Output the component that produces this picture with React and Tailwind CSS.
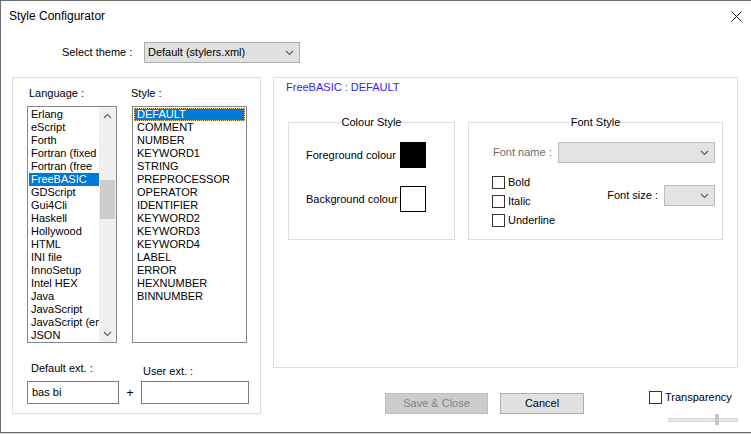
import React from 'react'

const languages = [
  'Erlang', 'eScript', 'Forth', 'Fortran (fixed', 'Fortran (free', 'FreeBASIC', 'GDScript',
  'Gui4Cli', 'Haskell', 'Hollywood', 'HTML', 'INI file', 'InnoSetup', 'Intel HEX', 'Java',
  'JavaScript', 'JavaScript (em', 'JSON',
]

const styles = [
  'DEFAULT', 'COMMENT', 'NUMBER', 'KEYWORD1', 'STRING', 'PREPROCESSOR', 'OPERATOR',
  'IDENTIFIER', 'KEYWORD2', 'KEYWORD3', 'KEYWORD4', 'LABEL', 'ERROR', 'HEXNUMBER', 'BINNUMBER',
]

function Chevron({ up = false, color = '#555' }) {
  return (
    <svg width="9" height="6" viewBox="0 0 9 6">
      <polyline
        points={up ? '1,5 4.5,1.5 8,5' : '1,1 4.5,4.5 8,1'}
        fill="none"
        stroke={color}
        strokeWidth="1.2"
      />
    </svg>
  )
}

function Combo({ width, text, disabled }) {
  return (
    <div
      className={`${width} h-[21px] flex items-center justify-between pl-[3px] pr-[5px] border ${
        disabled ? 'bg-[#e3e3e3] border-[#bcbcbc]' : 'bg-[#e1e1e1] border-[#adadad]'
      }`}
    >
      <span className="leading-[13px]">{text}</span>
      <Chevron color="#606060" />
    </div>
  )
}

function CheckBox({ label }) {
  return (
    <div className="flex items-center h-[13px]">
      <div className="w-[13px] h-[13px] border border-[#333] bg-white" />
      <span className="ml-[3px] leading-[13px]">{label}</span>
    </div>
  )
}

function GroupBox({ title, className, children }) {
  return (
    <div className={`relative border border-[#dcdcdc] ${className}`}>
      <span className="absolute -top-[7px] left-0 right-0 flex justify-center leading-[13px]">
        <span className="bg-white px-[1px]">{title}</span>
      </span>
      {children}
    </div>
  )
}

export default function App() {
  return (
    <div
      className="w-[751px] h-[434px] overflow-hidden bg-[#d4d4d4] text-[11px] text-black"
      style={{ fontFamily: '"Liberation Sans", Arial, sans-serif' }}
    >
      <div className="w-[751px] h-[433px] bg-white border-l border-t border-b border-[#6d6d6d] flex flex-col">
        {/* Title bar */}
        <div className="h-[30px] flex items-center justify-between pl-[8px] pr-[9px]">
          <span className="text-[12px]">Style Configurator</span>
          <svg width="11" height="11" viewBox="0 0 11 11">
            <path d="M0.5 0.5 L10.5 10.5 M10.5 0.5 L0.5 10.5" stroke="#111" strokeWidth="1" />
          </svg>
        </div>

        {/* Theme selector */}
        <div className="mt-[11px] pl-[61px] flex items-center">
          <span className="w-[82px] leading-[13px]">Select theme :</span>
          <Combo width="w-[156px]" text="Default (stylers.xml)" />
        </div>

        <div className="mt-[14px] pl-[11px] flex gap-[12px]">
          {/* Left group */}
          <div className="w-[249px] h-[337px] border border-[#dcdcdc] pt-[9px] pl-[14px]">
            <div className="flex gap-[15px]">
              <div className="w-[90px]">
                <div className="pl-[2px] leading-[13px] mb-[6px]">Language :</div>
                <div className="h-[237px] border border-[#828790] flex">
                  <div className="flex-1 pt-[1px] pl-[1px] overflow-hidden">
                    {languages.map((l) => (
                      <div
                        key={l}
                        className={`h-[13px] leading-[13px] pl-[2px] whitespace-nowrap ${
                          l === 'FreeBASIC' ? 'bg-[#0078d7] text-white' : ''
                        }`}
                      >
                        {l}
                      </div>
                    ))}
                  </div>
                  <div className="w-[17px] bg-[#f0f0f0] flex flex-col">
                    <div className="h-[17px] flex items-center justify-center">
                      <Chevron up color="#606060" />
                    </div>
                    <div className="h-[56px]" />
                    <div className="h-[39px] mx-[1px] bg-[#cdcdcd]" />
                    <div className="flex-1" />
                    <div className="h-[17px] flex items-center justify-center">
                      <Chevron color="#606060" />
                    </div>
                  </div>
                </div>
              </div>
              <div className="w-[115px]">
                <div className="-ml-[1px] leading-[13px] mb-[6px]">Style :</div>
                <div className="h-[237px] border border-[#828790] pt-[1px] px-[1px]">
                  {styles.map((s) => (
                    <div
                      key={s}
                      className={`h-[13px] leading-[11px] pl-[2px] ${
                        s === 'DEFAULT'
                          ? 'bg-[#0078d7] text-white border border-dotted border-[#f3c87a]'
                          : 'border border-transparent'
                      }`}
                    >
                      {s}
                    </div>
                  ))}
                </div>
              </div>
            </div>

            <div className="mt-[19px] flex items-end">
              <div className="flex flex-col">
                <span className="pl-[4px] leading-[13px] mb-[6px]">Default ext. :</span>
                <div className="w-[92px] h-[23px] border border-[#7a7a7a] flex items-center pl-[4px]">
                  bas bi
                </div>
              </div>
              <div className="w-[22px] h-[23px] flex items-center justify-center text-[12px]">+</div>
              <div className="flex flex-col">
                <span className="pl-[2px] leading-[13px] mb-[3px]">User ext. :</span>
                <div className="w-[108px] h-[23px] border border-[#7a7a7a]" />
              </div>
            </div>
          </div>

          {/* Right column */}
          <div className="flex flex-col">
            <div className="w-[465px] h-[291px] border border-[#dcdcdc] pt-[3px] pl-[12px]">
              <div className="leading-[13px] text-[#3325f5]">FreeBASIC : DEFAULT</div>
              <div className="mt-[28px] pl-[2px] flex gap-[13px]">
                <GroupBox title="Colour Style" className="w-[167px] h-[118px] pt-[19px] pl-[17px]">
                  <div className="flex items-center">
                    <span className="w-[94px] leading-[13px]">Foreground colour</span>
                    <div className="w-[26px] h-[26px] bg-black" />
                  </div>
                  <div className="mt-[18px] flex items-center">
                    <span className="w-[94px] leading-[13px]">Background colour</span>
                    <div className="w-[26px] h-[26px] bg-white border border-black" />
                  </div>
                </GroupBox>

                <GroupBox title="Font Style" className="w-[255px] h-[118px] pt-[19px]">
                  <div className="pl-[24px] flex items-center">
                    <span className="w-[65px] leading-[13px] text-[#6d6d6d]">Font name :</span>
                    <Combo width="w-[157px]" disabled />
                  </div>
                  <div className="mt-[13px] flex">
                    <div className="pl-[23px] flex flex-col gap-[6px]">
                      <CheckBox label="Bold" />
                      <CheckBox label="Italic" />
                      <CheckBox label="Underline" />
                    </div>
                    <div className="ml-auto mr-[7px] mt-[9px] self-start flex items-center">
                      <span className="mr-[6px] leading-[13px]">Font size :</span>
                      <Combo width="w-[51px]" disabled />
                    </div>
                  </div>
                </GroupBox>
              </div>
            </div>

            {/* Buttons */}
            <div className="flex items-start">
              <div className="mt-[25px] ml-[112px] flex gap-[12px]">
                <button className="w-[103px] h-[21px] bg-[#cccccc] border border-[#bfbfbf] text-[#838383] leading-[13px]">
                  Save &amp; Close
                </button>
                <button className="w-[84px] h-[21px] bg-[#e1e1e1] border border-[#adadad] leading-[13px]">
                  Cancel
                </button>
              </div>
              <div className="ml-[65px] mt-[23px] flex flex-col">
                <div className="flex items-center h-[13px]">
                  <div className="w-[13px] h-[13px] border border-[#333] bg-white" />
                  <span className="ml-[3px] leading-[13px]">Transparency</span>
                </div>
                <div className="relative ml-[19px] mt-[10px] w-[70px] h-[11px] flex items-center">
                  <div className="w-full h-[4px] bg-[#e7e7e7] border border-[#d6d6d6]" />
                  <div className="absolute left-[47px] top-0 w-[4px] h-[11px] bg-[#c6c6c6]" />
                </div>
              </div>
            </div>
          </div>
        </div>
      </div>
    </div>
  )
}
